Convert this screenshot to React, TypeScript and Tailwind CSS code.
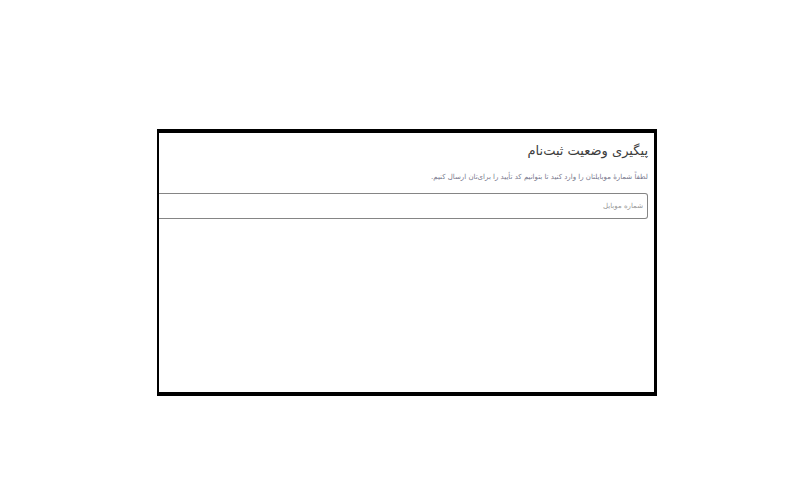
export default function App() {
  return (
    <main className="min-h-screen bg-white pt-[129px] pr-[143px] pb-24 pl-[157px] font-['DejaVu_Sans',sans-serif]">
      <form
        dir="rtl"
        lang="fa"
        className="border-t-4 border-r-[3px] border-b-4 border-l-2 border-black bg-white pt-1.5 pr-1.5 pb-[173px]"
      >
        <h1 className="text-[13px] leading-6 text-[#3c3c3c]">پیگیری وضعیت ثبت‌نام</h1>
        <label htmlFor="mobile" className="mt-1.5 block text-[7px] leading-4 text-[#77778c]">
          لطفاً شمارهٔ موبایلتان را وارد کنید تا بتوانیم کد تأیید را برای‌تان ارسال کنیم.
        </label>
        <input
          id="mobile"
          type="tel"
          dir="rtl"
          placeholder="شماره موبایل"
          className="mt-2 block h-[26px] w-full rounded-r-[3px] border border-l-0 border-[#858585] bg-white px-1 text-right text-[7px] text-[#333333] outline-none placeholder:text-[#999999]"
        />
      </form>
    </main>
  );
}
